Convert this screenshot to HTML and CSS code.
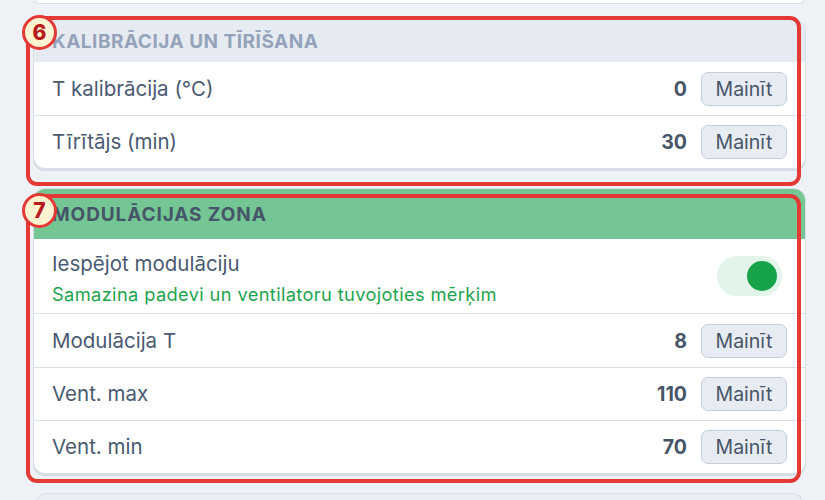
FILE: index.html
```html
<!DOCTYPE html>
<html lang="lv">
<head>
<meta charset="utf-8">
<title>Iestatījumi</title>
<link rel="stylesheet" href="styles.css">
</head>
<body>
<div class="page">
  <div class="stub"></div>

  <section class="card card-cal">
    <div class="card-head head-muted">KALIBRĀCIJA UN TĪRĪŠANA</div>
    <div class="row">
      <span class="label">T kalibrācija (°C)</span>
      <div class="ctrl"><span class="val">0</span><button class="btn">Mainīt</button></div>
    </div>
    <div class="row">
      <span class="label">Tīrītājs (min)</span>
      <div class="ctrl"><span class="val">30</span><button class="btn">Mainīt</button></div>
    </div>
  </section>

  <section class="card card-mod">
    <div class="card-head head-green">MODULĀCIJAS ZONA</div>
    <div class="row row-toggle">
      <div class="label-block">
        <div class="label">Iespējot modulāciju</div>
        <div class="hint">Samazina padevi un ventilatoru tuvojoties mērķim</div>
      </div>
      <div class="toggle"><span class="knob"></span></div>
    </div>
    <div class="row">
      <span class="label">Modulācija T</span>
      <div class="ctrl"><span class="val">8</span><button class="btn">Mainīt</button></div>
    </div>
    <div class="row">
      <span class="label">Vent. max</span>
      <div class="ctrl"><span class="val">110</span><button class="btn">Mainīt</button></div>
    </div>
    <div class="row">
      <span class="label">Vent. min</span>
      <div class="ctrl"><span class="val">70</span><button class="btn">Mainīt</button></div>
    </div>
  </section>

  <div class="stub-next"></div>

  <div class="mark mark-6"><span class="badge">6</span></div>
  <div class="mark mark-7"><span class="badge">7</span></div>
</div>
</body>
</html>
```

FILE: styles.css
```css
html, body {
  margin: 0;
  padding: 0;
}
body {
  background: #eef2f7;
  font-family: "Inter", "Noto Sans", sans-serif;
  color: #4a5a72;
  overflow: hidden;
  height: 500px;
}
.page {
  position: relative;
  padding: 0 19px 0 33px;
}
.stub {
  height: 3px;
  margin: 0 2px;
  background: #fff;
  border: 1px solid #d8dfe8;
  border-top: none;
  border-radius: 0 0 12px 12px;
}
.stub-next {
  height: 20px;
  margin: 19px 2px 0;
  background: #e9eef4;
  border: 1px solid #d8dfe8;
  border-bottom: none;
  border-radius: 12px 12px 0 0;
}
.card {
  background: #fff;
  border: 1px solid #d8dfe8;
  border-radius: 12px;
  box-shadow: 0 2px 0 #d5dce6;
  overflow: hidden;
}
.card-cal {
  margin-top: 15px;
}
.card-mod {
  margin-top: 19px;
}
.card-head {
  font-weight: 700;
  font-size: 19px;
  letter-spacing: 0.5px;
  padding-left: 18px;
  display: flex;
  align-items: center;
}
.head-muted {
  height: 42px;
  background: #e6ebf2;
  color: #94a3ba;
}
.head-green {
  height: 50px;
  background: #74c794;
  color: #475569;
  letter-spacing: 0.9px;
}
.row {
  display: flex;
  align-items: center;
  justify-content: space-between;
  height: 52px;
  padding: 0 18px 0 18px;
  border-top: 1px solid #dbe1ea;
}
.card-head + .row {
  border-top: none;
  height: 53px;
}
.card .row-toggle {
  height: 74px;
  padding-right: 23px;
}
.card-mod .row-toggle + .row {
  height: 53px;
}
.label {
  font-size: 20.5px;
  line-height: 26px;
  color: #4a5a72;
}
.label-block {
  display: flex;
  flex-direction: column;
  gap: 4px;
  padding-top: 6px;
}
.hint {
  font-size: 18.3px;
  letter-spacing: 0.35px;
  line-height: 26px;
  color: #1ea44f;
}
.ctrl {
  display: flex;
  align-items: center;
  gap: 14px;
}
.val {
  font-weight: 700;
  font-size: 19.5px;
  color: #475569;
}
.btn {
  width: 86px;
  height: 34px;
  font-family: inherit;
  font-size: 19.5px;
  color: #475569;
  background: #e7ecf3;
  border: 1px solid #c4cedc;
  border-radius: 7px;
  padding: 0;
}
.toggle {
  width: 65px;
  height: 40px;
  border-radius: 20px;
  background: #e3f4ea;
  display: flex;
  align-items: center;
  justify-content: flex-end;
  padding-right: 5px;
  box-sizing: border-box;
}
.knob {
  width: 30px;
  height: 30px;
  border-radius: 50%;
  background: #16a34a;
}
.mark {
  position: absolute;
  left: 26px;
  width: 775px;
  border: 4px solid #e53935;
  border-radius: 11px;
  box-sizing: border-box;
}
.mark-6 {
  top: 16px;
  height: 170px;
}
.mark-7 {
  top: 194px;
  height: 289px;
}
.badge {
  position: absolute;
  left: -8px;
  top: -5px;
  width: 35px;
  height: 35px;
  box-sizing: border-box;
  border: 3px solid #e53935;
  border-radius: 50%;
  background: #fdf3d0;
  color: #b71c1c;
  font-weight: 800;
  font-size: 21px;
  display: flex;
  align-items: center;
  justify-content: center;
}
```
